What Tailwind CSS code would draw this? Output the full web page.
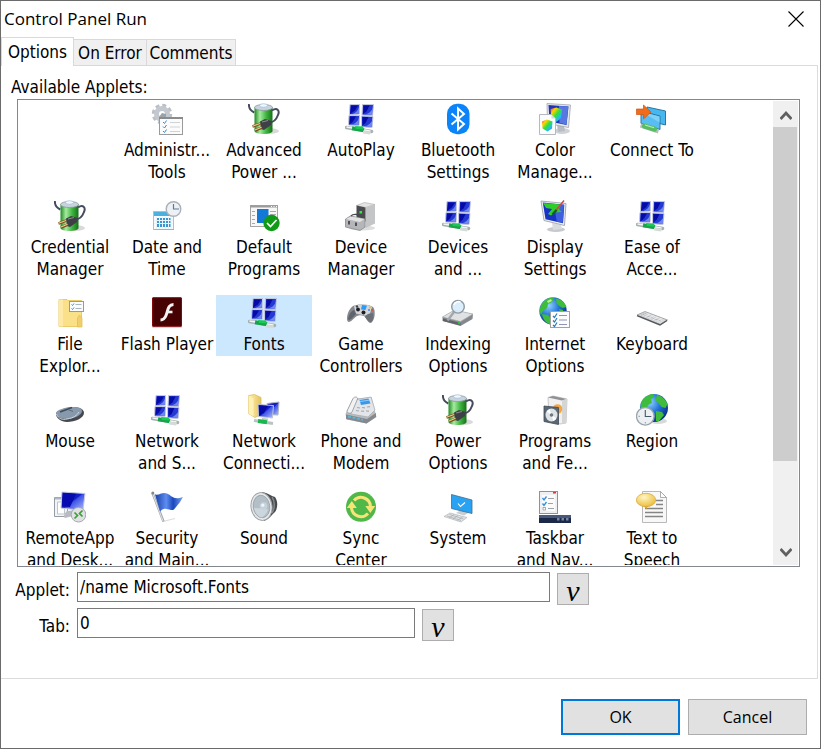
<!DOCTYPE html>
<html lang="en">
<head>
  <meta charset="UTF-8">
  <meta name="viewport" content="width=device-width, initial-scale=1.0">
  <title>Control Panel Run</title>
  <script src="https://cdn.jsdelivr.net/npm/@tailwindcss/browser@4"></script>
</head>
<body class="bg-white text-black font-['DejaVu_Sans_Condensed','DejaVu_Sans',sans-serif] text-[17px] leading-[22px]">

  <!-- Icon sprites -->
  <svg class="absolute size-0" aria-hidden="true" xmlns="http://www.w3.org/2000/svg">
    <defs>
      <linearGradient id="gBattery"><stop offset="0" stop-color="#1f8a22"/><stop offset=".3" stop-color="#a5eca0"/><stop offset=".65" stop-color="#3fb53f"/><stop offset="1" stop-color="#167018"/></linearGradient>
      <linearGradient id="gScreen" x1="0" y1="0" x2="1" y2="1"><stop offset="0" stop-color="#0508a0"/><stop offset=".48" stop-color="#1420c8"/><stop offset=".52" stop-color="#3c52e6"/><stop offset="1" stop-color="#b4c4ff"/></linearGradient>
      <linearGradient id="gRainbow" x1="0" y1="0" x2="1" y2="1"><stop offset="0" stop-color="#ff2b2b"/><stop offset=".25" stop-color="#ffd500"/><stop offset=".5" stop-color="#31e03a"/><stop offset=".75" stop-color="#22b8ff"/><stop offset="1" stop-color="#b11cff"/></linearGradient>
      <linearGradient id="gFolder"><stop offset="0" stop-color="#fff3b5"/><stop offset="1" stop-color="#e6c35c"/></linearGradient>
      <linearGradient id="gFlag"><stop offset="0" stop-color="#1740a8"/><stop offset=".4" stop-color="#5f8df0"/><stop offset=".65" stop-color="#1a48bd"/><stop offset="1" stop-color="#7ea4f0"/></linearGradient>
      <radialGradient id="gGlobe" cx=".35" cy=".3" r=".75"><stop offset="0" stop-color="#8fd3ff"/><stop offset=".5" stop-color="#2272d8"/><stop offset="1" stop-color="#0b2f86"/></radialGradient>
      <radialGradient id="gBubble" cx=".4" cy=".3" r=".8"><stop offset="0" stop-color="#fff6c4"/><stop offset="1" stop-color="#eab62c"/></radialGradient>
    </defs>

    <symbol id="admin" viewBox="0 0 32 32">
      <circle cx="11" cy="11" r="8.500" fill="none" stroke="#b9c0c6" stroke-width="3.500" stroke-dasharray="3.800 2.880"/>
      <circle cx="11" cy="11" r="5.500" fill="none" stroke="#c3c9ce" stroke-width="5"/>
      <path d="M8 14l3-4 4 1v4z" fill="#9aa3aa"/>
      <rect x="8.500" y="14.500" width="23" height="17" fill="#fbfbfb" stroke="#9a9a9a"/>
      <path d="M8 15h24" stroke="#8b8b8b" stroke-width="2"/>
      <path d="M12 19l1.500 1.500 2-3M12 23.500l1.500 1.500 2-3M12 28l1.500 1.500 2-3" fill="none" stroke="#2d8fdd"/>
      <path d="M19 19.500h10M19 24h10M19 28.500h10" stroke="#d0d3d6"/>
    </symbol>

    <symbol id="power" viewBox="0 0 32 32">
      <ellipse cx="21" cy="28" rx="10" ry="3" fill="#d9d9d9"/>
      <path d="M.8 1c0 4 2 7 5.500 8.500" fill="none" stroke="#454a5e" stroke-width="2"/>
      <path d="M6.500 4h18v24c0 4-18 4-18 0z" fill="url(#gBattery)"/>
      <ellipse cx="15.500" cy="4.500" rx="9" ry="3" fill="#c9d3dc" stroke="#8c98a4" stroke-width=".8"/>
      <ellipse cx="15.500" cy="2.500" rx="4" ry="1.800" fill="#eef6ff" stroke="#93b4d0" stroke-width=".6"/>
      <path d="M24 7.500c5-3.500 8 0 6 4.500-1.500 4-4 7-8 7.500" fill="none" stroke="#454a5e" stroke-width="2"/>
      <path d="M12 18.500l5-2.500 7 2-1 4-7 5-3-1z" fill="#3f4046"/>
      <path d="M14 19l6-1.500" stroke="#8b8d95"/>
      <path d="M12.500 20.500l-8 3M14 24.500l-7 3" stroke="#7c4d1f" stroke-width="2.600"/>
      <path d="M12 20.500l-7.500 2.700M13.500 24.300l-6.500 2.700" stroke="#f2c88a" stroke-width="1.200"/>
    </symbol>

    <symbol id="network" viewBox="0 0 32 32">
      <path d="M5 1.500h9.500v9.500l-10 .8zM17.500 1.500h11l-1 11-10.500-.5zM4 12.500h10.500l-.5 10-10.500-.5zM16.500 13l11.500.5-1 11-10.500-.8z" fill="#2438d2" stroke="#c4c8dc" stroke-width="1"/>
      <path d="M14 4v6.500l-7 .7c4-1 6-4 7-7.200zM28 5l-.8 7-7-.5c4-1 6-3 7.800-6.500zM14 15l-.5 7-7-.4c4-1 6-3 7.500-6.600zM27.500 17l-.8 7-7-.6c4-1 6-3 7.800-6.400z" fill="#7187f0"/>
      <path d="M6 2.500h7l-3 5-5 3.500zM18.500 2.500h6l-3 6-3.500 2.500zM5 13.500h6l-3 5-3.500 3zM17.500 14h6l-3 6-3 2.500z" fill="#070ba6"/>
      <path d="M1.500 24.500l25 4" stroke="#a5b0b0" stroke-width="3.500" stroke-linecap="round"/>
      <path d="M1.500 24l24 4" stroke="#f1f5f4" stroke-width="1.600"/>
      <path d="M7 25.300l12 2" stroke="#17a34a" stroke-width="4"/>
      <path d="M10 23l8 .5 1 3-8-.5z" fill="#19c855"/>
      <path d="M18 27.500l8 1.200-1 2.800-7-1z" fill="#d5dbd9"/>
    </symbol>

    <symbol id="bluetooth" viewBox="0 0 32 32">
      <rect x="5" y=".7" width="22.500" height="30.600" rx="10" fill="#0a84f8"/>
      <path d="M9.500 10.500L22 21l-6 5.500v-21L22 11 9.500 21.500" fill="none" stroke="#fff" stroke-width="2"/>
    </symbol>

    <symbol id="color" viewBox="0 0 32 32">
      <ellipse cx="23" cy="28" rx="8" ry="3" fill="#cfd2d6"/>
      <path d="M18 22l7 1 1 5-7 1z" fill="#b8bdc3"/>
      <path d="M8 .5l23.500 1.500-2 22.500-21-4z" fill="#e5e8ec" stroke="#a0a5ad" stroke-width=".8"/>
      <path d="M9.500 2l20 1.500-2 18.500-17-3.500z" fill="#1e35b8"/>
      <path d="M20 3l9.300.5-1.800 18-7-1.500z" fill="#5877df"/>
      <path d="M11.500 6l6-1.500 5.500 2-1 9-5 3.500-4.500-3z" fill="url(#gRainbow)"/>
      <path d="M.5 11.500h12l4 4v16H.5z" fill="#fbfcfd" stroke="#b4b9bf"/>
      <path d="M12.500 11.500v4h4z" fill="#d8dce0"/>
      <path d="M3 18.500l5-2 5.500 2-.5 7-4.500 3-5-3z" fill="url(#gRainbow)"/>
    </symbol>

    <symbol id="connect" viewBox="0 0 32 32">
      <path d="M11 4l18.500 4v14l-16-4z" fill="#47b7ee" stroke="#2578a8"/>
      <path d="M5 8l19 5v13.500L5 20.500z" fill="#57bdf2" stroke="#2578a8"/>
      <path d="M6 9l17.500 4.600v6z" fill="#7fd0f7"/>
      <path d="M4.500 22.500l18 6" stroke="#b9bdbd" stroke-width="4"/>
      <path d="M8.500 23l10 3.200" stroke="#56bd63" stroke-width="5" stroke-linecap="round"/>
      <path d="M9 22l9 2.800" stroke="#b6edbc" stroke-width="1.200"/>
      <path d="M.5 6h7V2l7.500 7-7.500 7v-4.500h-7z" fill="#f26b1d" stroke="#d3520c" stroke-width=".7"/>
    </symbol>

    <symbol id="date" viewBox="0 0 32 32">
      <rect x="2.500" y="11.500" width="20" height="18" fill="#f7fbfe" stroke="#b5bec5"/>
      <path d="M3 12h19v4H3z" fill="#4bb0df"/>
      <path d="M6 18h14v9H6z" fill="#3a95d2"/>
      <path d="M3 20.500h19M3 23.500h19M5.500 17v12M8.500 17v12M11.500 17v12M14.500 17v12M17.500 17v12M20 17v12" stroke="#e8f4fb"/>
      <path d="M3 29.500h20" stroke="#a6b0b8"/>
      <circle cx="22.500" cy="9" r="7.300" fill="#eef1f4" stroke="#a9b1b9" stroke-width="1.400"/>
      <path d="M22.500 4v5h5.500" fill="none" stroke="#5b7b9c" stroke-width="1.200"/>
    </symbol>

    <symbol id="default" viewBox="0 0 32 32">
      <rect x="2.500" y="5.500" width="27" height="21" fill="#f7f7f7" stroke="#a5a5a5"/>
      <path d="M2 6.500h28" stroke="#9b9b9b" stroke-width="2"/>
      <path d="M23 6.500h1M25.500 6.500h1M28 6.500h1" stroke="#fff"/>
      <path d="M4 11.500h3M4 15.500h3M4 19.500h3M4 23.500h3M22 11.500h6M22 14.500h6" stroke="#a9a9a9"/>
      <path d="M9 9h11.500v14H9z" fill="#1379d8"/>
      <circle cx="23.500" cy="23" r="8.200" fill="#119a17"/>
      <path d="M19 23l3.500 3.500 6-6.500" fill="none" stroke="#fff" stroke-width="1.700"/>
    </symbol>

    <symbol id="device" viewBox="0 0 32 32">
      <ellipse cx="17" cy="28" rx="13" ry="2.500" fill="#ddd"/>
      <path d="M11.500 5.500l8-3 10.500 2-9.500 3z" fill="#e4e4e4" stroke="#a7a7a7" stroke-width=".6"/>
      <path d="M20.500 7.500L30 4.500v19l-9.500 4.500z" fill="#c4c5c7"/>
      <path d="M11.500 5.500l9 2v14l-9-2.500z" fill="#494b4d"/>
      <rect x="14.500" y="11" width="2.500" height="2.500" fill="#27ef4a"/>
      <path d="M.5 19l5-3 14.500 3v8l-5 3.500L.5 27z" fill="#b5b6b9" stroke="#87898c" stroke-width=".8"/>
      <path d="M1 19l5-2.500L19.500 19 15 22z" fill="#e1e2e3"/>
      <path d="M3 21h2v3.500H3zM10 22.500h2V26h-2z" fill="#505257"/>
      <path d="M6 16c2-2.500 9-2 11 1.500" fill="none" stroke="#47494c" stroke-width="1.300"/>
    </symbol>

    <symbol id="display" viewBox="0 0 32 32">
      <ellipse cx="17" cy="29.500" rx="9" ry="2.500" fill="#c6cace"/>
      <path d="M13 23l9 2 1 4-9 1z" fill="#d9dcdf"/>
      <path d="M2 1l25 2.500-1.500 22L5 20.500z" fill="#eceef0" stroke="#9fa5ab" stroke-width=".9"/>
      <path d="M3.800 2.600l21.500 2.200-1.300 18.500-17.500-4z" fill="#1832c4"/>
      <path d="M15 4l10 .8-1.300 18-6-1.300z" fill="#3e60e0"/>
      <path d="M4 3l18 1.500-2 4.500 2.500 3-6.500.5-4 3-3-1.500 4-5L7 8z" fill="#2dce29"/>
      <path d="M25 .5l-9 11" stroke="#d84343" stroke-width="1.500"/>
      <path d="M17.500 10l-4 4.500" stroke="#165e22" stroke-width="2.400"/>
    </symbol>

    <symbol id="explorer" viewBox="0 0 32 32">
      <path d="M5 2.500h8l1 1h13.500v26H5z" fill="#fbe08a" stroke="#ebca6a"/>
      <path d="M5 2.500h4v27H5z" fill="#ffe9a6"/>
      <path d="M23.500 21l2-3 2.500 3v9h-4.500z" fill="#f1d06c" stroke="#dfbc52" stroke-width=".7"/>
      <rect x="15.500" y="4.500" width="14" height="10" fill="#fafcff" stroke="#8f9ba8"/>
      <path d="M17.500 7.500l1 1 1.500-2M17.500 11.500l1 1 1.500-2" fill="none" stroke="#2d8fdd"/>
      <path d="M21.500 7.500h6M21.500 11.500h6" stroke="#a9b4be"/>
    </symbol>

    <symbol id="flash" viewBox="0 0 32 32">
      <rect x="1" y="1.500" width="30" height="29.500" rx="1" fill="#d7d4d4"/>
      <rect x="1.500" y=".7" width="29" height="28.600" rx=".5" fill="#460203" stroke="#81090b"/>
      <path d="M22.500 7.500c-5.500 0-5.500 6-7.500 11-1.200 3-2.500 4.500-5.500 4.500" fill="none" stroke="#f3f1f1" stroke-width="3"/>
      <path d="M15.500 15h6" stroke="#f3f1f1" stroke-width="2.600"/>
    </symbol>

    <symbol id="game" viewBox="0 0 32 32">
      <path d="M2 22c0-6 3-11 6-13 3-2 16-2.500 20 1 3 3 2 14-2 16-3 .5-4-4-7-7-3-1-5-1-7 0-3 2-6 6-8 6-1.500 0-2-1.500-2-3z" fill="#85898f"/>
      <path d="M9 9.500c4-3 15-2.500 18 .5l-2 6.500-5 2-9-2z" fill="#d3d7da"/>
      <path d="M3 22c1-5 3-8 6-9l2 4c-2 2-5 6-7 6z" fill="#60646a"/>
      <path d="M28 16l-5 1-3 3c2 3 4 5 6 5 2-1 3-6 2-9z" fill="#6c7076"/>
      <path d="M17 8l5 .5-1.500 4.500-4.500-.5z" fill="#2f9bf0"/>
      <circle cx="13" cy="12.500" r="1.900" fill="#1b1d20"/><circle cx="18.500" cy="15.500" r="2" fill="#1b1d20"/><circle cx="12" cy="9.500" r="1.200" fill="#43474c"/>
      <circle cx="25" cy="10.500" r="1" fill="#efb824"/><circle cx="27" cy="13" r="1" fill="#e44c3b"/><circle cx="24" cy="13" r="1" fill="#3d89e0"/>
    </symbol>

    <symbol id="indexing" viewBox="0 0 32 32">
      <path d="M.5 20l12-7 18.500 4-.5 5-12 7-18-5z" fill="#85888c"/>
      <path d="M.5 20l12-7 18.500 4-12.500 7.500z" fill="#dfe1e3" stroke="#a6a9ac" stroke-width=".6"/>
      <path d="M1 21.500l17.500 4.500v2.500L1 24z" fill="#606367"/>
      <path d="M16 24.500l2 .5v2.500l-2-.5z" fill="#2fc23b"/>
      <path d="M12 15l-6.500 8.500" stroke="#a2a7ac" stroke-width="2.400"/>
      <circle cx="16" cy="9.800" r="6.300" fill="#d7ecfb" fill-opacity=".9" stroke="#8d98a3" stroke-width="1.400"/>
      <path d="M12 8c1-3 4-4 6.500-3" fill="none" stroke="#fff" stroke-width="1.500"/>
    </symbol>

    <symbol id="internet" viewBox="0 0 32 32">
      <circle cx="14" cy="14" r="13.700" fill="url(#gGlobe)"/>
      <path d="M4 5c3-4 8-5 11-4l-2 4-4 2-1 4-4 3-2 4C0 13 1 9 4 5zM17 1.500c5 .5 9 4 10.500 8.500l-4 1-3-2-3-3zM3 17l6 1 4 4-1 5.500c-5-1-8-5-9-10.500zM20 12l4 1v2h-3z" fill="#3fbc3b"/>
      <path d="M8 4l4-2 1 2-4 2z" fill="#b9f08c"/>
      <rect x="11.500" y="14.500" width="19" height="16" fill="#fcfcfc" stroke="#a1a1a1"/>
      <path d="M14 19l1.500 1.500 2.500-4M14 23.500l1.500 1.500 2.500-4M14 28l1.500 1.500 2.500-4" fill="none" stroke="#2d79bd" stroke-width="1.200"/>
      <path d="M20 18.500h8M20 23h8M20 27.500h8" stroke="#8f94b2"/>
    </symbol>

    <symbol id="keyboard" viewBox="0 0 32 32">
      <path d="M1 18l8-3.500L31.500 23 24 27.500z" fill="#d8dadc" stroke="#94979a" stroke-width=".8"/>
      <path d="M1 18.700l23 9.300 7-4.500" fill="none" stroke="#55585c" stroke-width="1.400"/>
      <path d="M4 18l5-2 18 6.500-4.500 2.500z" fill="#b5b8bb"/>
      <path d="M6 18l18 7M8 17l18 6.500M10.500 16.500l16 6M9 19.500l5-2.500M13 21l5-2.500M17 22.500l5-2.500M21 24l5-2.500" stroke="#f3f4f5" stroke-width=".7"/>
    </symbol>

    <symbol id="mouse" viewBox="0 0 32 32">
      <path d="M2 20c0-3 10-7 17-7 6 0 11 2 11 6 0 5-9 9-17 9-6 0-11-4-11-8z" fill="#45484d"/>
      <path d="M2 19c0-3 10-6 17-6 5 0 9 1 9 4 0 4-8 8-15 8-6 0-11-3-11-6z" fill="#8799ad"/>
      <path d="M2.500 20c2 5 6 6 10.500 5 7-1 10-4 12-7" fill="none" stroke="#d1dae3"/>
      <path d="M6 18l12-4.500" stroke="#424c59" stroke-width="1.800"/>
      <path d="M14 15.500l5 2" stroke="#5d6a79"/>
    </symbol>

    <symbol id="netconn" viewBox="0 0 32 32">
      <path d="M.5 1.500l6-1 6.500 3v17l-6 3-6.500-4z" fill="url(#gFolder)" stroke="#d9bd63" stroke-width=".8"/>
      <path d="M.5 1.500l5 3v18l-5-3z" fill="#fff0b3"/>
      <path d="M19 9.500l12-1.500-1 13-10-.5z" fill="url(#gScreen)" stroke="#aeb4c6"/>
      <path d="M10 10.500l15.500 1-1 12.500-14-1.500z" fill="url(#gScreen)" stroke="#c3c7d2"/>
      <path d="M11 11.500l9 .5-4 7-5 2.500z" fill="#070ba6"/>
      <path d="M14 24l6 .5v2h-6z" fill="#c5c8cc"/>
      <path d="M6 26.500l19 3" stroke="#bac3c1" stroke-width="3"/>
      <path d="M10 27l9 1.200" stroke="#1cb64e" stroke-width="4"/>
    </symbol>

    <symbol id="phone" viewBox="0 0 32 32">
      <path d="M.5 20l7-15 19-2 5 20-10 6.500-20-4z" fill="#b9bcc0"/>
      <path d="M9 6l17-3 4 13-7 7-17-3z" fill="#e3e5e8" stroke="#a5a9ad" stroke-width=".7"/>
      <path d="M14.500 6l9-1.500 2 5-9.500 1.500z" fill="#3b98e8"/>
      <path d="M15 7.500l9-1.300" stroke="#8fcbff"/>
      <path d="M2 17L8 4.500c1-2 5-2 4.500.5L7 18c-1 2-5 1.500-5-1z" fill="#f1f2f4" stroke="#909498" stroke-width=".8"/>
      <path d="M12 13.500l3 .5M17 13.500l3 .3M11 16.500l3 .5M16 17l3 .4M22 13l3-.3M21 17l3 .2" stroke="#a5abb2" stroke-width="1.200"/>
      <path d="M1 20.500l21 4.500 9-6v4l-9.500 6.500L1 25z" fill="#85888d"/>
      <path d="M3 22.500l15 3.300" stroke="#5cb7d6" stroke-width="1.800" stroke-dasharray="3 1.500"/>
    </symbol>

    <symbol id="programs" viewBox="0 0 32 32">
      <path d="M9 3.500l5-1.500 14 3-1 24-6 1-11-5z" fill="#f0f0f0" stroke="#bdbdbd" stroke-width=".8"/>
      <path d="M9 3.500l5-1.500 13.500 3-4.500 1.500z" fill="#8f9194"/>
      <path d="M23 6.500l5-1.500-1 24-4 1z" fill="#d5d5d5"/>
      <circle cx="18.500" cy="15" r="4.800" fill="#f5a541"/>
      <path d="M5 12l14.500 1.500v17L5 27.500z" fill="#5a6875" stroke="#3f4954" stroke-width=".8"/>
      <ellipse cx="12.500" cy="21" rx="6" ry="6.500" fill="#dfe3e7"/>
      <path d="M12.500 21l-5-3.500 3-2.500zM12.500 21l5 3.500-3 2.500z" fill="#fff"/>
      <circle cx="12.500" cy="21" r="1.800" fill="#6d7985"/>
    </symbol>

    <symbol id="region" viewBox="0 0 32 32">
      <ellipse cx="22" cy="27" rx="9" ry="3" fill="#d9d9d9"/>
      <circle cx="18" cy="14" r="14" fill="url(#gGlobe)"/>
      <path d="M7 5c3-3 7-5 10-5l1 3-3 2 1 4-4 2-2 4-5 1C4 11 5 8 7 5zM21 1c5 1 9 5 10.500 9l-2 4-4-1-3-4-3-3zM20 17l6 1 2 3-5 6h-3z" fill="#3fbc3b"/>
      <circle cx="9.300" cy="22.300" r="8.800" fill="#edf0f3" stroke="#9ba5ae" stroke-width="1.300"/>
      <path d="M9.300 16v6.500h6" fill="none" stroke="#45596d" stroke-width="1.100"/>
      <path d="M9.300 28v1.500M2.500 22.300H4" stroke="#8b98a4"/>
    </symbol>

    <symbol id="remote" viewBox="0 0 32 32">
      <path d="M.5 6.500h13v19H.5z" fill="#f2f4f7" stroke="#959ca6"/>
      <path d="M1 7.500h12" stroke="#aeb7c2" stroke-width="2"/>
      <path d="M3.500 11v12h7V11z" fill="#fff" stroke="#bcc3cb"/>
      <path d="M13 20l9-1 1 5-12 3c-2-1-1-4 2-7z" fill="#b8bcc2"/>
      <path d="M8 1l23 1.500-2 17L7 17z" fill="url(#gScreen)" stroke="#c5cada"/>
      <path d="M9 2l13 1-6 13-8-.5z" fill="#070baf"/>
      <circle cx="24.500" cy="23.700" r="7.300" fill="#dfe1e3" stroke="#a5a8ac"/>
      <path d="M20.500 21.500l3 3-3 3M28.500 19.500l-3 3 3 3" fill="none" stroke="#3c9f38" stroke-width="1.700"/>
    </symbol>

    <symbol id="security" viewBox="0 0 32 32">
      <path d="M12 30.500l12-3" stroke="#dcdcdc" stroke-width="1.200"/>
      <path d="M1.500 2l11 28.500" stroke="#a2a7ad" stroke-width="2.400"/>
      <path d="M1.500 2l10.500 28" stroke="#eef0f2" stroke-width=".8"/>
      <circle cx="1.800" cy="2" r="1.500" fill="#85898d"/>
      <path d="M4 3.500c5 1 7-3 12-1 5 2 6 7 16 3.500-2 3-3 6-5 7.500-3 3-3 6-7 5.500-5-.5-6-3-11 1.500z" fill="url(#gFlag)"/>
    </symbol>

    <symbol id="sound" viewBox="0 0 32 32">
      <path d="M14 1c6 1 9 4 13 5 3 4 3 11 0 15-3 2-5 7-11 9z" fill="#484b4e"/>
      <path d="M24 6c3 4 3 11 0 16" fill="none" stroke="#85888b" stroke-width="1.500"/>
      <ellipse cx="13.500" cy="15.500" rx="10.500" ry="14" fill="#e7e9eb" stroke="#a2a5a8" transform="rotate(-8 13.500 15.500)"/>
      <ellipse cx="13.500" cy="15.500" rx="8.300" ry="11.300" fill="#b3bec6" stroke="#8d999f" stroke-width=".7" transform="rotate(-8 13.500 15.500)"/>
      <path d="M6 17c1 5 4 9 8 9.500 3-2 5-5 6-8l-5-1z" fill="#cbd6dd"/>
      <circle cx="15.500" cy="15" r="3.700" fill="#c6d2da"/>
      <circle cx="14.800" cy="14.200" r="1.600" fill="#eff5f8"/>
    </symbol>

    <symbol id="sync" viewBox="0 0 32 32">
      <circle cx="16" cy="15.800" r="15" fill="#4fb848"/>
      <path d="M9 9.500a9.500 9.500 0 0 1 16.500 6M23 22.500a9.500 9.500 0 0 1-16.500-6" fill="none" stroke="#f7e478" stroke-width="3"/>
      <path d="M1.800 17l5-7 5 7zM20.300 15h10l-5 7z" fill="#f7e478"/>
    </symbol>

    <symbol id="system" viewBox="0 0 32 32">
      <path d="M14 22l5-3 8 2.500-5 3z" fill="#c9cdd1"/>
      <path d="M9.500 3.500l20.500 5.500v13.500l-20.500-5z" fill="#28a3f4" stroke="#3f6d8e" stroke-width=".8"/>
      <path d="M16 12.500l2.500 3 4.500-4" fill="none" stroke="#fff" stroke-width="1.100"/>
      <path d="M2 25.500l6-3.500 17 4.500-6 4.500z" fill="#e0e3e5" stroke="#b2b6ba" stroke-width=".7"/>
      <path d="M5 25l14 4.500M7.500 23.500l14 4.500M7 27l5-3.500M11 28l5-3.500M15.500 29.500l5-3.500" stroke="#a5aaae" stroke-width=".7"/>
    </symbol>

    <symbol id="taskbar" viewBox="0 0 32 32">
      <rect x=".5" y=".5" width="18" height="22" fill="#eef0f2" stroke="#8d9299"/>
      <rect x="3" y="4" width="13" height="16" fill="#fbfbfb"/>
      <path d="M14 1h3v1.500h-3z" fill="#d03b2f"/>
      <path d="M3.500 7l1.500 2 2.500-3.500M3.500 12.500l1.500 2L7.500 11" fill="none" stroke="#2d8fdd" stroke-width="1.300"/>
      <rect x="4" y="16.500" width="2.500" height="2.500" fill="none" stroke="#999" stroke-width=".8"/>
      <path d="M9 7.500h6M9 12.500h5M9 17.500h6" stroke="#9da2a8"/>
      <path d="M0 24h32v8H0z" fill="#1b2848"/>
      <path d="M0 24h32v3H0z" fill="#495878"/>
      <path d="M18 27h2.500v2.500H18zM22.500 27H25v2.500h-2.500zM27 27h2.500v2.500H27z" fill="#7786a4"/>
    </symbol>

    <symbol id="speech" viewBox="0 0 32 32">
      <path d="M6.500.5h18l6 6v25h-24z" fill="#f8f8f8" stroke="#b9b9b9"/>
      <path d="M24.500.5v6h6z" fill="#fff" stroke="#999" stroke-width=".8"/>
      <path d="M20 9.500h7M20 13.500h7M9 17.500h18M9 21.500h18M9 25.500h18" stroke="#858585" stroke-width="1.300"/>
      <path d="M7 14.500h5l-1.500 3.500z" fill="#e2ac28"/>
      <ellipse cx="10" cy="9" rx="9.700" ry="6.700" fill="url(#gBubble)" stroke="#d5a42c" stroke-width=".7"/>
    </symbol>
  </svg>

  <main class="h-screen flex flex-col border border-[#6b6b6b]">
    <header class="flex justify-between items-center h-9 shrink-0 pl-[3px] pr-4 font-['Open_Sans','Noto_Sans',sans-serif]">
      <h1>Control Panel Run</h1>
      <button type="button" aria-label="Close">
        <svg class="size-4" viewBox="0 0 16 16" fill="none" stroke="#000" stroke-width="1.100"><path d="M.5.500l15 15M15.500.500l-15 15"/></svg>
      </button>
    </header>

    <!-- Tabs -->
    <div role="tablist" class="flex items-end shrink-0 h-[29px] -mb-px z-10">
      <button type="button" role="tab" aria-selected="true" class="h-[29px] w-[73px] bg-white border border-b-0 border-[#d9d9d9]">Options</button>
      <button type="button" role="tab" aria-selected="false" class="h-[27px] w-[73px] bg-[#f0f0f0] border border-l-0 border-[#d9d9d9]">On Error</button>
      <button type="button" role="tab" aria-selected="false" class="h-[27px] w-[89px] bg-[#f0f0f0] border border-l-0 border-[#d9d9d9]">Comments</button>
    </div>

    <section role="tabpanel" class="flex-1 min-h-0 flex flex-col mr-[2px] pl-4 pr-[17px] pb-[38px] pt-[10px] border border-l-0 border-[#dcdcdc]">
      <h2 id="appletsLabel" class="shrink-0 -ml-[6px] mb-px">Available Applets:</h2>

      <div class="flex-1 min-h-0 flex bg-white border border-[#828790] p-px">
        <div id="appletList" role="listbox" aria-labelledby="appletsLabel" class="flex-1 min-w-0 flex flex-wrap content-start overflow-hidden pl-[3px]"></div>

        <!-- Scroll bar -->
        <div class="w-[25px] shrink-0 flex flex-col items-center bg-[#f0f0f0]">
          <svg class="w-3 h-[26px] shrink-0" viewBox="0 0 12 26" fill="none" stroke="#606060" stroke-width="2.800"><path d="M.5 18L6 12l5.500 6"/></svg>
          <div class="w-full flex-1 pr-px"><div class="h-[81%] bg-[#cdcdcd]"></div></div>
          <svg class="w-3 h-[26px] shrink-0" viewBox="0 0 12 26" fill="none" stroke="#606060" stroke-width="2.800"><path d="M.5 10L6 16l5.500-6"/></svg>
        </div>
      </div>

      <form class="shrink-0 flex flex-col gap-1 pt-[5px] -ml-4">
        <div class="flex items-start pr-[211px]">
          <label for="applet" class="w-[69px] mr-[7px] pt-[7px] text-right">Applet:</label>
          <input id="applet" type="text" value="/name Microsoft.Fonts" class="flex-1 min-w-0 h-[30px] px-[2px] border border-[#7a7a7a] bg-white mr-[7px]">
          <button type="button" aria-label="Applet variables" class="size-8 mt-px -mb-px pt-1 bg-[#e1e1e1] border border-[#adadad] font-['Liberation_Serif',serif] font-medium italic text-[30px] leading-6">v</button>
        </div>
        <div class="flex items-start pr-[346px]">
          <label for="tab" class="w-[69px] mr-[7px] pt-[7px] text-right">Tab:</label>
          <input id="tab" type="text" value="0" class="flex-1 min-w-0 h-[30px] px-[2px] border border-[#7a7a7a] bg-white mr-[7px]">
          <button type="button" aria-label="Tab variables" class="size-8 mt-px -mb-px pt-1 bg-[#e1e1e1] border border-[#adadad] font-['Liberation_Serif',serif] font-medium italic text-[30px] leading-6">v</button>
        </div>
      </form>
    </section>

    <footer class="shrink-0 flex justify-end gap-2 pt-5 pb-[13px] pr-[13px] font-['Open_Sans','Noto_Sans',sans-serif] text-[16px]">
      <button type="submit" class="w-[119px] h-9 bg-[#e1e1e1] border-2 border-[#0078d7]">OK</button>
      <button type="button" class="w-[119px] h-9 bg-[#e1e1e1] border border-[#adadad]">Cancel</button>
    </footer>
  </main>

  <script>
    // icon, label lines
    const applets = [
      ['', ''],
      ['admin', 'Administr...<br>Tools'],
      ['power', 'Advanced<br>Power ...'],
      ['network', 'AutoPlay'],
      ['bluetooth', 'Bluetooth<br>Settings'],
      ['color', 'Color<br>Manage...'],
      ['connect', 'Connect To'],
      ['power', 'Credential<br>Manager'],
      ['date', 'Date and<br>Time'],
      ['default', 'Default<br>Programs'],
      ['device', 'Device<br>Manager'],
      ['network', 'Devices<br>and ...'],
      ['display', 'Display<br>Settings'],
      ['network', 'Ease of<br>Acce...'],
      ['explorer', 'File<br>Explor...'],
      ['flash', 'Flash Player'],
      ['network', 'Fonts'],
      ['game', 'Game<br>Controllers'],
      ['indexing', 'Indexing<br>Options'],
      ['internet', 'Internet<br>Options'],
      ['keyboard', 'Keyboard'],
      ['mouse', 'Mouse'],
      ['network', 'Network<br>and S...'],
      ['netconn', 'Network<br>Connecti...'],
      ['phone', 'Phone and<br>Modem'],
      ['power', 'Power<br>Options'],
      ['programs', 'Programs<br>and Fe...'],
      ['region', 'Region'],
      ['remote', 'RemoteApp<br>and Desk...'],
      ['security', 'Security<br>and Main...'],
      ['sound', 'Sound'],
      ['sync', 'Sync<br>Center'],
      ['system', 'System'],
      ['taskbar', 'Taskbar<br>and Nav...'],
      ['speech', 'Text to<br>Speech'],
    ];

    const appletList = document.getElementById('appletList');

    function renderApplets(selected) {
      appletList.innerHTML = applets.map(([icon, label], i) => `
        <div class="w-[97px] h-[97px] pr-px">
          ${icon ? `<button type="button" role="option" data-index="${i}" aria-selected="${i === selected}"
            class="w-full flex flex-col items-center pt-[2px] pb-px whitespace-nowrap aria-selected:bg-[#cce8ff]">
            <svg class="size-8 mb-1"><use href="#${icon}"/></svg>
            <span>${label}</span>
          </button>` : ''}
        </div>
      `).join('');
    }

    appletList.addEventListener('click', (e) => {
      const item = e.target.closest('button');
      if (item) renderApplets(Number(item.dataset.index));
    });

    renderApplets(16);
  </script>
</body>
</html>
